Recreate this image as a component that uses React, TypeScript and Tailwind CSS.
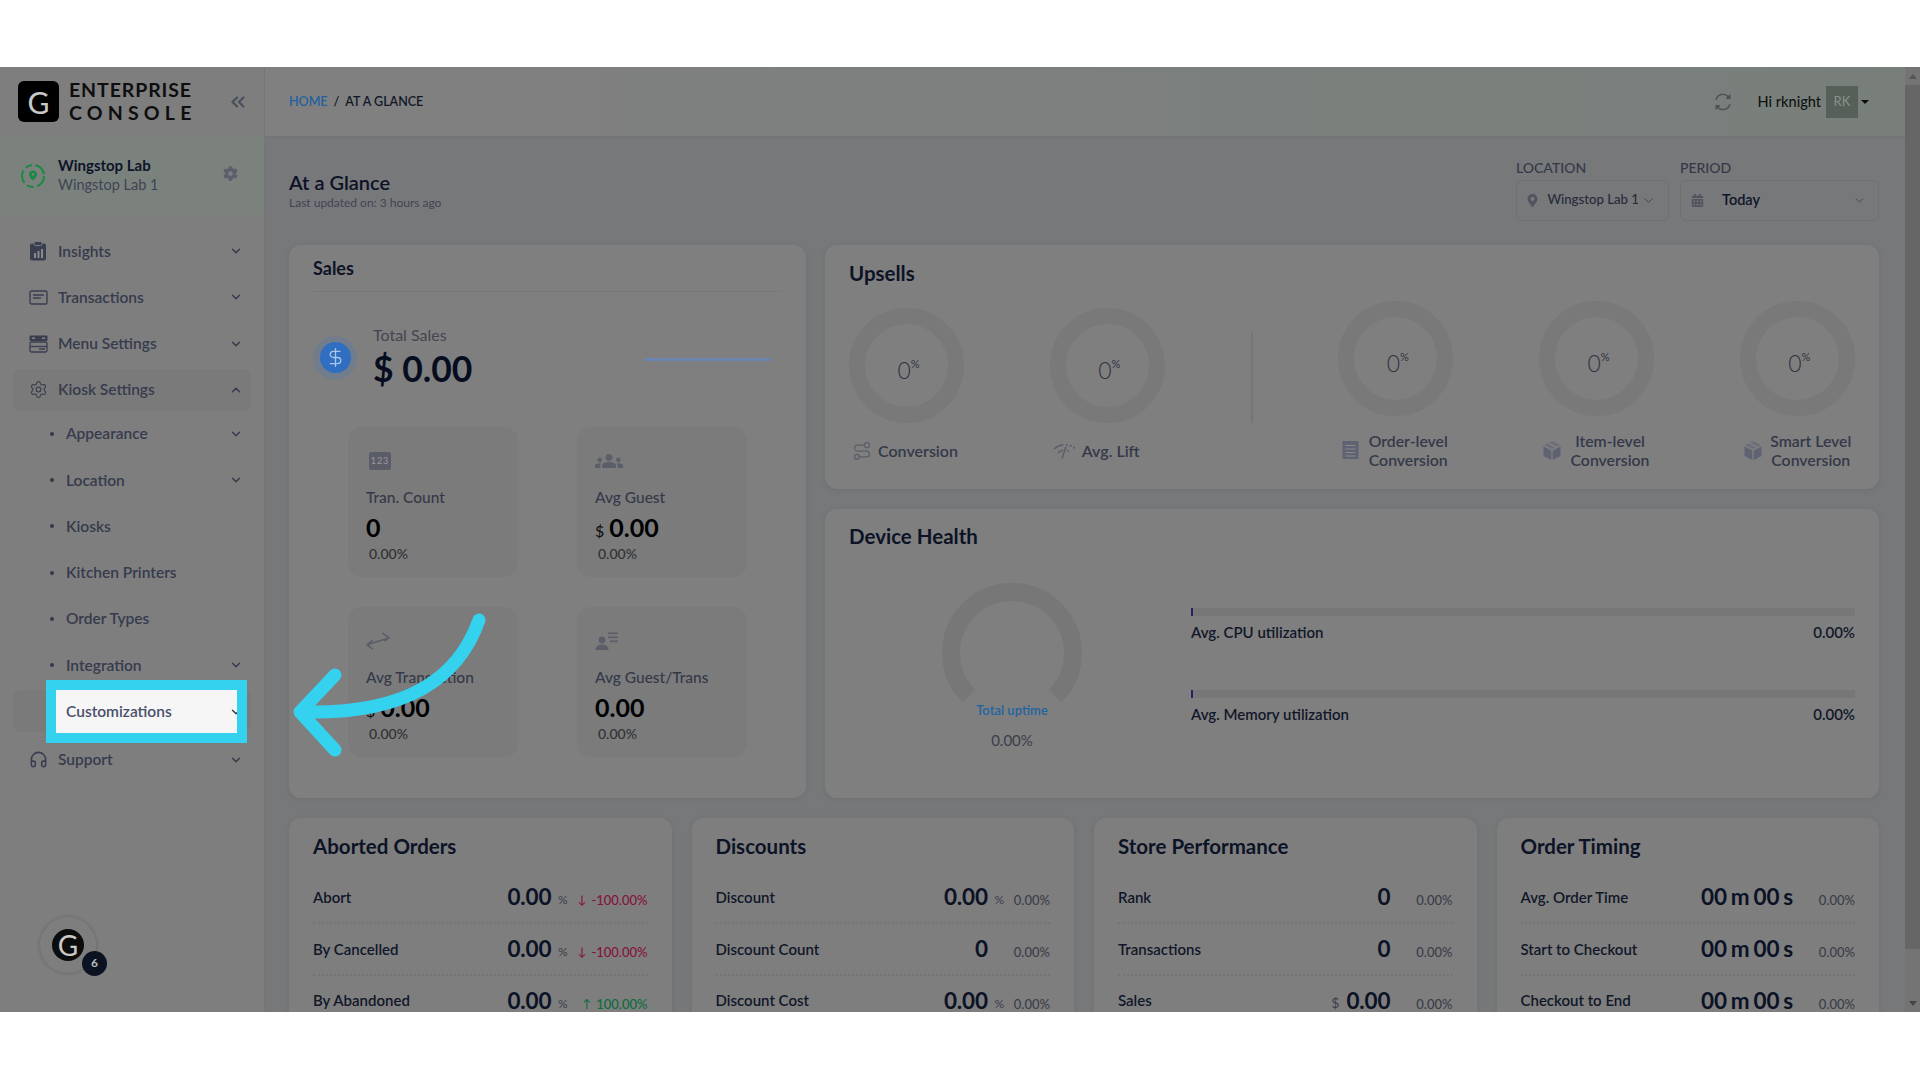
import React from "react";
import { ChevronDown, ChevronUp, ChevronsLeft, Settings, Headphones, DollarSign, Route } from "lucide-react";
import { FaCog, FaMapMarkerAlt, FaCalendarAlt } from "react-icons/fa";
import { MdGroups } from "react-icons/md";

const Insights = () => (
  <svg width="18" height="20" viewBox="0 0 18 20"><rect x="1" y="2.5" width="16" height="17" rx="2" fill="#3a3f50"/><rect x="5" y="0.5" width="8" height="4" rx="1.5" fill="#3a3f50" stroke="#7d7d7d" strokeWidth="1"/><rect x="5" y="12" width="2" height="5" fill="#8a8a8a"/><rect x="8.5" y="10" width="2" height="7" fill="#8a8a8a"/><rect x="12" y="8" width="2" height="9" fill="#8a8a8a"/></svg>
);
const Transactions = () => (
  <svg width="19" height="15" viewBox="0 0 19 15" fill="none" stroke="#3a3f50" strokeWidth="1.4"><rect x="1" y="1" width="17" height="13" rx="1.5"/><path d="M4 5h11M4 8h8" strokeWidth="1.6"/></svg>
);
const MenuSet = () => (
  <svg width="19" height="18" viewBox="0 0 19 18"><rect x="0.5" y="0.5" width="18" height="5.5" rx="1" fill="#3a3f50"/><rect x="3" y="2.5" width="3" height="1.4" fill="#8a8a8a"/><rect x="13" y="2.5" width="3" height="1.4" fill="#8a8a8a"/><rect x="1" y="7" width="17" height="10" rx="1.5" fill="none" stroke="#3a3f50" strokeWidth="1.3"/><path d="M1 11.5h17" stroke="#3a3f50" strokeWidth="1.3"/><path d="M10 14h6" stroke="#3a3f50" strokeWidth="1.5"/></svg>
);
const LabIcon = () => (
  <svg width="26" height="26" viewBox="0 0 26 26" fill="none"><circle cx="13" cy="13" r="11" stroke="#1a8a40" strokeWidth="2" strokeDasharray="13 3.5 7 3.5"/><path d="M13 7.5c-2.4 0-4 1.8-4 3.9 0 2.7 4 6.1 4 6.1s4-3.4 4-6.1c0-2.1-1.6-3.9-4-3.9z" fill="#1a8a40"/><circle cx="13" cy="11.3" r="1.3" fill="#7b827e"/></svg>
);
const Sync = () => (
  <svg width="20" height="20" viewBox="0 0 20 20" fill="none" stroke="#4d5350" strokeWidth="1.4"><path d="M3 8a7.2 7.2 0 0 1 13-2.4"/><path d="M17 12a7.2 7.2 0 0 1-13 2.4"/><path d="M16.8 2.6v3.6h-3.6" fill="#4d5350"/><path d="M3.2 17.4v-3.6h3.6" fill="#4d5350"/></svg>
);
const Swap = () => (
  <svg width="24" height="20" viewBox="0 0 22 18" fill="none" stroke="#5b5e68" strokeWidth="1.5"><path d="M1 12.5L20 6.5M15 1.5l6 4.5-4.5 3"/><path d="M6 8.5L1 12.5l5 4"/></svg>
);
const GuestTrans = () => (
  <svg width="24" height="18" viewBox="0 0 24 18" fill="#5b5e68"><circle cx="7" cy="8" r="3.4"/><path d="M0.5 18c0-3.6 2.8-5.5 6.5-5.5s6.5 1.9 6.5 5.5z"/><rect x="13" y="0.5" width="10" height="1.6"/><rect x="13" y="4.5" width="10" height="1.6"/><rect x="15" y="8.5" width="8" height="1.6"/></svg>
);
const Lift = () => (
  <svg width="23" height="16" viewBox="0 0 23 16" fill="none" stroke="#5b5e68" strokeWidth="1.5"><path d="M1 6c3-2.8 6-4 9-4.3"/><path d="M13 1.7c3 .2 6 1.4 9 3.6" strokeDasharray="2 2"/><path d="M5 10c1.5-1.5 3-2.5 5-3"/><path d="M13 3.5l-4 12"/><path d="M14 7l2 1.5" /></svg>
);
const Receipt = () => (
  <svg width="17" height="20" viewBox="0 0 17 20"><rect x="0.5" y="1" width="16" height="18" fill="#5f6270"/><path d="M3.5 5.5h10M3.5 9h10M3.5 12.5h10M3.5 16h10" stroke="#8a8a8a" strokeWidth="1.2"/></svg>
);
const Box = () => (
  <svg width="18" height="21" viewBox="0 0 18 21"><path d="M9 1l8 4-8 4-8-4z" fill="#6c6f79"/><path d="M0.5 6.5l7.8 4v9.5l-7.8-4z" fill="#5f6270"/><path d="M17.5 6.5l-7.8 4v9.5l7.8-4z" fill="#5f6270"/><path d="M5 3l8 4" stroke="#8a8a8a" strokeWidth="1"/></svg>
);

const Chev = ({ up }: { up?: boolean }) =>
  up ? <ChevronUp size={14} strokeWidth={2.4} color="#34394a" /> : <ChevronDown size={14} strokeWidth={2.4} color="#34394a" />;

function TopItem({ icon, label, up, active }: { icon: React.ReactNode; label: string; up?: boolean; active?: boolean }) {
  return (
    <div className={active ? "flex h-[42px] items-center mx-[13px] mt-[2px] pl-[13px] pr-[8px] rounded-lg bg-[#7a7a7a]" : "flex h-[46.25px] items-center mx-[13px] pl-[13px] pr-[8px]"}>
      <span className="flex w-[24px] justify-center">{icon}</span>
      <span className="ml-[8px] flex-1 text-[15.5px] font-semibold text-[#363b4d]">{label}</span>
      <Chev up={up} />
    </div>
  );
}

function SubItem({ label, chev }: { label: string; chev?: boolean }) {
  return (
    <div className="flex h-[46.25px] items-center mx-[13px] pl-[37px] pr-[8px]">
      <span className="h-[4px] w-[4px] rounded-full bg-[#34394a]" />
      <span className="ml-[12px] flex-1 text-[15.5px] font-semibold text-[#363b4d]">{label}</span>
      {chev && <Chev />}
    </div>
  );
}

function Sidebar() {
  return (
    <aside className="flex w-[265px] shrink-0 flex-col border-r border-[#757575] bg-[#7e7e7e]">
      <div className="flex h-[69px] items-center pl-[18px]">
        <div className="flex h-[41px] w-[41px] items-center justify-center rounded-[6px] bg-black text-[30px] leading-none text-[#c9c9c9]">G</div>
        <div className="ml-[10px] w-[124px] font-bold leading-[22.5px] text-[#0e0e10]">
          <div className="text-[19.5px] tracking-[0.9px] whitespace-nowrap">ENTERPRISE</div>
          <div className="text-[19.5px] tracking-[5.2px] whitespace-nowrap">CONSOLE</div>
        </div>
        <ChevronsLeft size={22} strokeWidth={2.4} color="#4a4f5e" className="ml-[34px]" />
      </div>
      <div className="flex h-[79px] items-center bg-[#7b827e] pl-[20px]">
        <LabIcon />
        <div className="ml-[12px] flex-1">
          <div className="text-[15px] leading-[19px] font-bold text-[#0d1428]">Wingstop Lab</div>
          <div className="text-[14.5px] leading-[20px] text-[#3f4454]">Wingstop Lab 1</div>
        </div>
        <FaCog size={15} color="#5a5f6b" className="mr-[26px] mb-[4px]" />
      </div>
      <div className="flex flex-col pt-[13px]">
        <TopItem icon={<Insights />} label="Insights" />
        <TopItem icon={<Transactions />} label="Transactions" />
        <TopItem icon={<MenuSet />} label="Menu Settings" />
        <TopItem icon={<Settings size={19} strokeWidth={1.4} color="#3a3f50" />} label="Kiosk Settings" up active />
        <SubItem label="Appearance" chev />
        <SubItem label="Location" chev />
        <SubItem label="Kiosks" />
        <SubItem label="Kitchen Printers" />
        <SubItem label="Order Types" />
        <SubItem label="Integration" chev />
        <div className="relative flex h-[46.25px] items-center">
          <div className="mx-[13px] h-[42px] w-[240px] rounded-lg bg-[#7a7a7a]" />
          <div className="absolute left-[46px] top-[-8px] flex h-[63px] w-[201px] items-center overflow-hidden border-[10px] border-[#34d2ef] bg-[#f6f6f6] pl-[10px]">
            <span className="flex-1 text-[15.5px] font-semibold text-[#4a4f6a]">Customizations</span>
            <span className="mr-[-6px]"><Chev /></span>
          </div>
        </div>
        <div className="mt-[2px]">
          <TopItem icon={<Headphones size={19} strokeWidth={2} color="#3a3f50" />} label="Support" />
        </div>
      </div>
      <div className="relative ml-[40px] mt-[134px] flex h-[56px] w-[56px] items-center justify-center rounded-full bg-[#7e7e7e] shadow-[0_0_4px_rgba(0,0,0,0.2)]">
        <div className="flex h-[32px] w-[32px] items-center justify-center rounded-full bg-[#0c0c0c] text-[28px] leading-none text-[#c9c9c9]">G</div>
        <div className="absolute left-[42px] top-[34px] flex h-[25px] w-[25px] items-center justify-center rounded-full bg-[#0b1322] text-[12px] font-bold text-[#b9b9b9]">6</div>
      </div>
    </aside>
  );
}

function Select({ label, icon, text, wide }: { label: string; icon: React.ReactNode; text: string; wide?: boolean }) {
  return (
    <div className={wide ? "w-[199px]" : "w-[153px]"}>
      <div className="text-[14px] leading-[20px] font-medium text-[#333848] mt-[-2px]">{label}</div>
      <div className="flex h-[41px] items-center rounded-md border border-[#707070] pl-[8px] pr-[12px] mt-[2px]">
        <span className="flex w-[17px] justify-center">{icon}</span>
        <span className={wide ? "ml-[16px] flex-1 text-[14.5px] font-semibold text-[#0f1528] mb-[1px]" : "ml-[8px] whitespace-nowrap text-[13.2px] font-medium text-[#262b3c] mb-[2px]"}>{text}</span>
        <ChevronDown size={wide ? 13 : 15} strokeWidth={1.6} color="#3f4454" className={wide ? "shrink-0" : "ml-[2px] shrink-0"} />
      </div>
    </div>
  );
}

function MiniCard({ icon, label, prefix, value, pct }: { icon: React.ReactNode; label: string; prefix?: boolean; value: string; pct: string }) {
  return (
    <div className="h-[150px] w-[170px] rounded-[14px] bg-[#7b7b7b] pl-[18px] pt-[22px]">
      <div className="flex h-[24px] items-center">{icon}</div>
      <div className="mt-[14px] text-[15.5px] font-medium leading-[20px] text-[#343949]">{label}</div>
      <div className="mt-[5px] flex h-[30px] items-baseline leading-[30px]">
        {prefix && <span className="mr-[5px] text-[16px] leading-[30px] text-[#0b0b0b]">$</span>}
        <span className="text-[25px] font-bold text-black">{value}</span>
      </div>
      <div className="ml-[3px] mt-[3px] text-[14px] font-medium leading-[18px] text-[#2f3034]">{pct}</div>
    </div>
  );
}

function Donut({ label, icon, two }: { label: string[]; icon: React.ReactNode; two?: boolean }) {
  return (
    <div className={two ? "flex w-[115px] flex-col" : "mt-[7px] flex w-[115px] flex-col"}>
      <div className="flex h-[115px] w-[115px] items-center justify-center rounded-full border-[16px] border-[#797979]">
        <span className="ml-[4px] mt-[8px] flex items-start font-light text-[#30333f]">
          <span className="text-[23px] leading-[26px]">0</span>
          <span className="text-[11px] font-normal leading-[14px]">%</span>
        </span>
      </div>
      <div className={two ? "mt-[15px] flex items-center pl-[4px]" : "mt-[16px] flex items-center pl-[3px]"}>
        {icon}
        {two ? (
          <div className="ml-[5px] w-[88px] shrink-0 text-center text-[15.8px] font-semibold leading-[19px] text-[#343949]">
            <div className="whitespace-nowrap">{label[0]}</div>
            <div>{label[1]}</div>
          </div>
        ) : (
          <span className="ml-[6px] whitespace-nowrap text-[16px] font-semibold text-[#343949]">{label[0]}</span>
        )}
      </div>
    </div>
  );
}

function Bar({ label }: { label: string }) {
  return (
    <div>
      <div className="h-[8px] w-full border-l-2 border-[#2c1d66] bg-[#777777]" />
      <div className="mt-[6px] flex justify-between text-[15px] font-semibold leading-[20px] text-[#111729]">
        <span>{label}</span>
        <span>0.00%</span>
      </div>
    </div>
  );
}

type Row = { label: string; prefix?: string; value: string; unit?: string; arrow?: "up" | "down"; delta: string; tone?: "red" | "green" };

function StatCard({ title, rows, deltaW }: { title: string; rows: Row[]; deltaW: string }) {
  return (
    <div className="h-[194px] overflow-hidden rounded-t-[12px] bg-[#7e7e7e] px-[24px] pt-[14px] shadow-[0_1px_6px_rgba(0,0,0,0.08)]">
      <h3 className="text-[20.5px] font-bold leading-[28px] text-[#0d1326]">{title}</h3>
      <div className="mt-[12px]">
        {rows.map((r, i) => (
          <div key={r.label} className={i < 2 ? "flex h-[52px] items-center border-b-2 border-dotted border-[#757575] text-[#111729]" : "flex h-[36px] items-center pt-[13px] text-[#111729]"}>
            <span className="flex-1 text-[15px] font-semibold">{r.label}</span>
            {r.prefix && <span className="mr-[7px] mt-[4px] text-[14px] leading-[16px] text-[#3a3d48]">{r.prefix}</span>}
            <span className="text-[22.5px] font-bold leading-[24px] tracking-[-0.1px] [word-spacing:-1.5px] text-[#0c1226]">{r.value}</span>
            <span className="mt-[6px] w-[16px] text-right text-[12px] leading-[16px] text-[#3a3d48]">{r.unit}</span>
            <span className={deltaW + " mt-[6px] flex items-center justify-end whitespace-nowrap text-[13px] font-medium leading-[16px] " + (r.tone === "red" ? "text-[#85123a]" : r.tone === "green" ? "text-[#0d6b3a]" : "text-[#3a3d48]")}>
              {r.arrow && <span className="mr-[5px] text-[12px]">{r.arrow === "down" ? "↓" : "↑"}</span>}
              {r.delta}
            </span>
          </div>
        ))}
      </div>
    </div>
  );
}

function Main() {
  return (
    <main className="flex min-w-0 flex-1 flex-col overflow-hidden bg-[#77787a]">
      <header className="flex h-[69px] shrink-0 items-center bg-linear-to-r from-[#808080] to-[#787f7b] pl-[24px] pr-[36px] shadow-[0_1px_3px_rgba(0,0,0,0.06)]">
        <div className="flex-1 pt-[1px] text-[12.5px] font-semibold text-[#121828]">
          <span className="text-[#23609f]">HOME</span>
          <span className="mx-[6px]">/</span>
          <span>AT A GLANCE</span>
        </div>
        <Sync />
        <span className="ml-[25px] text-[14.5px] font-medium text-[#0f1410]">Hi rknight</span>
        <div className="ml-[5px] flex h-[32px] w-[32px] items-center justify-center bg-[#566059] text-[13px] text-[#8b918e]">RK</div>
        <span className="ml-[3px] h-0 w-0 border-x-[4px] border-t-[4px] border-x-transparent border-t-[#0c0c0c]" />
      </header>
      <div className="flex-1 overflow-hidden pl-[24px] pr-[26px]">
        <div className="flex items-start justify-between pt-[24px]">
          <div className="pt-[8px]">
            <h1 className="text-[20px] font-semibold leading-[28px] text-[#0c1226]">At a Glance</h1>
            <div className="text-[12px] leading-[14px] text-[#3f4454]">Last updated on: 3 hours ago</div>
          </div>
          <div className="flex gap-[11px]">
            <Select label="LOCATION" icon={<FaMapMarkerAlt size={13} color="#50545f" />} text="Wingstop Lab 1" />
            <Select label="PERIOD" wide icon={<FaCalendarAlt size={13} color="#50545f" />} text="Today" />
          </div>
        </div>

        <div className="mt-[24px] grid grid-cols-[517px_1fr] gap-x-[19px]">
          <section className="rounded-[12px] bg-[#7f7f7f] px-[24px] pt-[11px] shadow-[0_1px_6px_rgba(0,0,0,0.08)]">
            <h2 className="border-b border-[#787878] pb-[11px] text-[18px] font-bold leading-[24px] text-[#0d1326]">Sales</h2>
            <div className="mt-[33px] flex items-center">
              <div className="flex h-[44px] w-[44px] items-center justify-center rounded-full bg-[#717d8c]">
                <div className="flex h-[31px] w-[31px] items-center justify-center rounded-full bg-[#2f6ec0]">
                  <DollarSign size={21} strokeWidth={1.5} color="#a9c6ea" />
                </div>
              </div>
              <div className="ml-[16px] flex-1">
                <div className="text-[16px] leading-[20px] text-[#44464f]">Total Sales</div>
                <div className="mt-[3px] text-[35.5px] font-bold leading-[42px] text-[#070d20]">$ 0.00</div>
              </div>
              <div className="mr-[11px] mt-[3px] h-[3px] w-[127px] bg-[#6b85b0]" />
            </div>
            <div className="ml-[35px] mt-[37px] grid w-[399px] grid-cols-2 gap-x-[59px] gap-y-[30px]">
              <MiniCard icon={<div className="ml-[3px] flex h-[18px] w-[22px] items-center justify-center rounded-[2px] bg-[#5a5c68] text-[9px] tracking-[1px] text-[#9a9aa0]">123</div>} label="Tran. Count" value="0" pct="0.00%" />
              <MiniCard icon={<MdGroups size={28} color="#5b5e68" />} label="Avg Guest" prefix value="0.00" pct="0.00%" />
              <MiniCard icon={<Swap />} label="Avg Transaction" prefix value="0.00" pct="0.00%" />
              <MiniCard icon={<GuestTrans />} label="Avg Guest/Trans" value="0.00" pct="0.00%" />
            </div>
          </section>

          <div className="flex flex-col gap-[20px]">
            <section className="h-[244px] rounded-[12px] bg-[#7f7f7f] pl-[24px] pt-[14px] shadow-[0_1px_6px_rgba(0,0,0,0.08)]">
              <h2 className="text-[20.5px] font-bold leading-[28px] text-[#0d1326]">Upsells</h2>
              <div className="mt-[14px] flex gap-[85.75px]">
                <Donut label={["Conversion"]} icon={<Route size={20} strokeWidth={1.5} color="#5b5e68" />} />
                <Donut label={["Avg. Lift"]} icon={<Lift />} />
                <div className="mt-[32px] h-[90px] w-[2px] bg-[#757578]" />
                <Donut two label={["Order-level", "Conversion"]} icon={<Receipt />} />
                <Donut two label={["Item-level", "Conversion"]} icon={<Box />} />
                <Donut two label={["Smart Level", "Conversion"]} icon={<Box />} />
              </div>
            </section>
            <section className="h-[289px] rounded-[12px] bg-[#7f7f7f] pl-[24px] pr-[24px] pt-[13px] shadow-[0_1px_6px_rgba(0,0,0,0.08)]">
              <h2 className="text-[20.5px] font-bold leading-[28px] text-[#0d1326]">Device Health</h2>
              <div className="flex">
                <div className="mt-[33px] flex w-[326px] shrink-0 flex-col items-center">
                  <svg width="140" height="122" viewBox="0 0 140 122" fill="none">
                    <path d="M26.9 113.1A61 61 0 1 1 113.1 113.1" stroke="#777777" strokeWidth="18" />
                  </svg>
                  <div className="mt-[-3px] text-[13px] font-semibold leading-[16px] text-[#1f649f]">Total uptime</div>
                  <div className="mt-[12px] text-[15px] leading-[20px] text-[#3a3d48]">0.00%</div>
                </div>
                <div className="ml-[16px] mt-[58px] flex flex-1 flex-col gap-[48px]">
                  <Bar label="Avg. CPU utilization" />
                  <Bar label="Avg. Memory utilization" />
                </div>
              </div>
            </section>
          </div>
        </div>

        <div className="mt-[20px] grid grid-cols-4 gap-x-[20px]">
          <StatCard title="Aborted Orders" deltaW="w-[80px]" rows={[
            { label: "Abort", value: "0.00", unit: "%", arrow: "down", delta: "-100.00%", tone: "red" },
            { label: "By Cancelled", value: "0.00", unit: "%", arrow: "down", delta: "-100.00%", tone: "red" },
            { label: "By Abandoned", value: "0.00", unit: "%", arrow: "up", delta: "100.00%", tone: "green" },
          ]} />
          <StatCard title="Discounts" deltaW="w-[46px]" rows={[
            { label: "Discount", value: "0.00", unit: "%", delta: "0.00%" },
            { label: "Discount Count", value: "0", delta: "0.00%" },
            { label: "Discount Cost", value: "0.00", unit: "%", delta: "0.00%" },
          ]} />
          <StatCard title="Store Performance" deltaW="w-[46px]" rows={[
            { label: "Rank", value: "0", delta: "0.00%" },
            { label: "Transactions", value: "0", delta: "0.00%" },
            { label: "Sales", prefix: "$", value: "0.00", delta: "0.00%" },
          ]} />
          <StatCard title="Order Timing" deltaW="w-[46px]" rows={[
            { label: "Avg. Order Time", value: "00 m 00 s", delta: "0.00%" },
            { label: "Start to Checkout", value: "00 m 00 s", delta: "0.00%" },
            { label: "Checkout to End", value: "00 m 00 s", delta: "0.00%" },
          ]} />
        </div>
      </div>
    </main>
  );
}

export default function App() {
  return (
    <div className="relative flex h-[1080px] w-[1920px] flex-col overflow-hidden bg-white font-['Lato',sans-serif]">
      <div className="h-[67px] shrink-0 bg-white" />
      <div className="flex h-[945px] shrink-0">
        <Sidebar />
        <Main />
        <div className="flex w-[15px] shrink-0 flex-col items-center bg-[#747474]">
          <div className="flex h-[18px] items-center justify-center"><span className="h-0 w-0 border-x-[4px] border-b-[5px] border-x-transparent border-b-[#555555]" /></div>
          <div className="h-[864px] w-full bg-[#666666]" />
          <div className="flex flex-1 items-end justify-center pb-[6px]"><span className="h-0 w-0 border-x-[4px] border-t-[5px] border-x-transparent border-t-[#444444]" /></div>
        </div>
      </div>
      <div className="flex-1 bg-white" />
      <svg className="pointer-events-none absolute left-0 top-0" width="1920" height="1080" viewBox="0 0 1920 1080" fill="none">
        <path d="M479 620C458 680 405 714 305 712" stroke="#34d2ef" strokeWidth="13" strokeLinecap="round" />
        <path d="M335 675L300 712L335 750" stroke="#34d2ef" strokeWidth="13" strokeLinecap="round" strokeLinejoin="round" />
      </svg>
    </div>
  );
}
